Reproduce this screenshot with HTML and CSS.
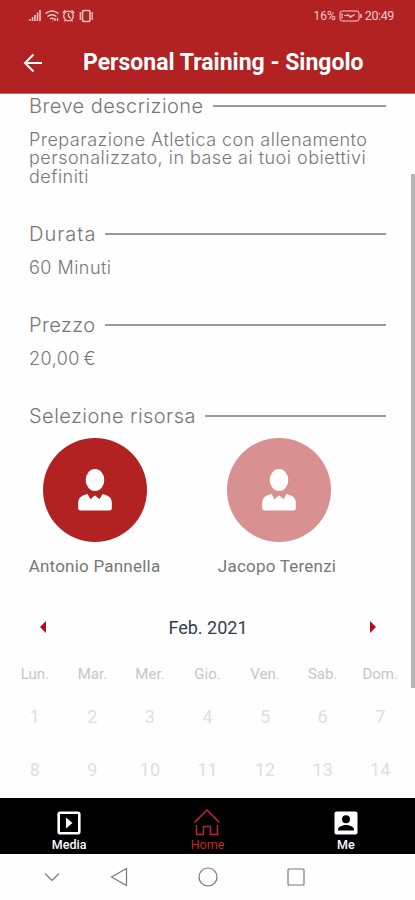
FILE: index.html
```
<!DOCTYPE html>
<html lang="it">
<head>
    <meta charset="UTF-8">
    <meta name="viewport" content="width=device-width, initial-scale=1.0">
    <title>Personal Training - Singolo</title>
    <link rel="stylesheet" href="styles.css">
</head>
<body>
    <header class="header">
        <div class="status-bar">
            <svg class="status-icons" width="68" height="16" viewBox="0 0 68 16" fill="none" stroke="currentColor">
                <!-- Signal -->
                <path d="M2 13v-2M4.5 13v-4M7 13V7M9.5 13V4.500M12 13V2" stroke-width="1.500"/>
                <!-- Wifi -->
                <path d="M17.500 5.500q6.500-5 13 0M19.500 8.500q4.500-3.500 9 0M22 11q2-1.500 4 0" stroke-width="1.500"/>
                <path d="M24 13h.5M27 10v3M29.500 10v3" stroke-width="1.300"/>
                <!-- Alarm -->
                <circle cx="40.500" cy="8" r="4.800" stroke-width="1.300"/>
                <path d="M40.500 5v3l2 2.500M34.800 5l2.700-2.700M46.200 5l-2.700-2.700M36.500 13.500l1-1.500M44.500 13.500l-1-1.500" stroke-width="1.300"/>
                <!-- Vibration -->
                <rect x="54.500" y="2.500" width="7.500" height="11" rx="1.500" stroke-width="1.500"/>
                <path d="M52.300 4v8M64.200 4v8" stroke-width="1.300"/>
            </svg>
            <div class="status-right">
                <span class="battery-level">16%</span>
                <svg width="23" height="12" viewBox="0 0 23 12" fill="none" stroke="currentColor">
                    <rect x="1" y="1" width="19" height="10" rx="2"/>
                    <path d="M22 4v4" stroke-width="1.500"/>
                    <path d="M3 3v6" stroke-width="1"/>
                    <path d="M5 5.500l5-1v2l6-2-5 3.500v-2z" fill="currentColor" stroke-width=".5"/>
                </svg>
                <span class="clock">20:49</span>
            </div>
        </div>
        <div class="title-bar">
            <svg class="back" width="20" height="20" viewBox="0 0 20 20" fill="none" stroke="currentColor" stroke-width="2">
                <path d="M19 10H2M10.500 1.500L2 10l8.500 8.500"/>
            </svg>
            <h1>Personal Training - Singolo</h1>
        </div>
    </header>

    <main class="content">
        <section class="info">
            <h2>Breve descrizione</h2>
            <p>Preparazione Atletica con allenamento<br>personalizzato, in base ai tuoi obiettivi<br>definiti</p>
        </section>
        <section class="info duration">
            <h2>Durata</h2>
            <p class="value">60 Minuti</p>
        </section>
        <section class="info">
            <h2>Prezzo</h2>
            <p class="value price">20,00 €</p>
        </section>
        <section class="resources">
            <h2>Selezione risorsa</h2>
            <div class="resource-list">
                <div class="resource">
                    <div class="avatar">
                        <svg width="34" height="42" viewBox="0 0 34 42" fill="currentColor">
                            <ellipse cx="17" cy="11" rx="9.300" ry="11"/>
                            <path d="M9.500 25L12.500 30.300L15 28L17 26.500L19 28L21.500 30.300L24.500 25Q33.800 27 33.800 33V39Q33.800 41.500 31.300 41.500H2.700Q.2 41.500.2 39V33Q.2 27 9.500 25Z"/>
                        </svg>
                    </div>
                    <span>Antonio Pannella</span>
                </div>
                <div class="resource unselected">
                    <div class="avatar">
                        <svg width="34" height="42" viewBox="0 0 34 42" fill="currentColor">
                            <ellipse cx="17" cy="11" rx="9.300" ry="11"/>
                            <path d="M9.500 25L12.500 30.300L15 28L17 26.500L19 28L21.500 30.300L24.500 25Q33.800 27 33.800 33V39Q33.800 41.500 31.300 41.500H2.700Q.2 41.500.2 39V33Q.2 27 9.500 25Z"/>
                        </svg>
                    </div>
                    <span>Jacopo Terenzi</span>
                </div>
            </div>
        </section>

        <section class="calendar">
            <div class="month">
                <svg width="6" height="12" viewBox="0 0 6 12" fill="currentColor"><path d="M6 0v12L0 6z"/></svg>
                <span>Feb. 2021</span>
                <svg width="6" height="12" viewBox="0 0 6 12" fill="currentColor"><path d="M0 0v12l6-6z"/></svg>
            </div>
            <div class="weekdays">
                <span>Lun.</span><span>Mar.</span><span>Mer.</span><span>Gio.</span><span>Ven.</span><span>Sab.</span><span>Dom.</span>
            </div>
            <div class="days">
                <span>1</span><span>2</span><span>3</span><span>4</span><span>5</span><span>6</span><span>7</span>
                <span>8</span><span>9</span><span>10</span><span>11</span><span>12</span><span>13</span><span>14</span>
            </div>
        </section>
        <div class="scrollbar"></div>
    </main>

    <nav class="tabs">
        <div class="tab">
            <svg width="24" height="24" viewBox="0 0 24 24" fill="none" stroke="currentColor">
                <rect x="1.700" y="1.700" width="20.600" height="20.600" rx="1.500" stroke-width="2.600"/>
                <path d="M9 6.500v11l6.500-5.500z" fill="currentColor" stroke="none"/>
            </svg>
            <span>Media</span>
        </div>
        <div class="tab active">
            <svg width="28" height="28" viewBox="0 0 28 28" fill="none" stroke="currentColor" stroke-width="1.500">
                <path d="M1.500 14.500L14 2l12.500 12.500M3.500 17v9.500h7v-8h7v8h7V17"/>
            </svg>
            <span>Home</span>
        </div>
        <div class="tab">
            <svg width="24" height="24" viewBox="0 0 24 24">
                <rect x=".5" y=".5" width="23" height="23" rx="2" fill="currentColor"/>
                <circle cx="12" cy="8.300" r="4" fill="#000"/>
                <path d="M4 19.500v-1c0-3 5-4.500 8-4.500s8 1.500 8 4.500v1z" fill="#000"/>
            </svg>
            <span>Me</span>
        </div>
    </nav>

    <div class="system-nav">
        <svg width="16" height="10" viewBox="0 0 16 10"><path d="M1 1.500l7 7 7-7"/></svg>
        <svg width="18" height="20" viewBox="0 0 18 20"><path d="M16.500 1.500v17L1.500 10z"/></svg>
        <svg width="20" height="20" viewBox="0 0 20 20"><circle cx="10" cy="10" r="9"/></svg>
        <svg width="18" height="18" viewBox="0 0 18 18"><rect x="1" y="1" width="16" height="16" rx="1"/></svg>
    </div>
</body>
</html>
```

FILE: styles.css
```
* {
    margin: 0;
    padding: 0;
    box-sizing: border-box;
}

body {
    width: 415px;
    height: 900px;
    display: flex;
    flex-direction: column;
    overflow: hidden;
    font-family: Roboto, sans-serif;
    background-color: #fefefe;
}

svg {
    display: block;
    flex: none;
}

.header {
    height: 94px;
    flex: none;
    background-color: #b22222;
    border-bottom: 1px solid #c96a6a;
    color: #fff;
}

.status-bar {
    height: 31px;
    display: flex;
    justify-content: space-between;
    align-items: center;
    padding: 0 21px 0 28px;
    color: #f3cccc;
}

.status-right {
    display: flex;
    align-items: center;
    gap: 3px;
    font-size: 12px;
}

.clock {
    font-size: 12.5px;
    letter-spacing: -0.4px;
}

.title-bar {
    height: 63px;
    display: flex;
    align-items: center;
    padding-left: 23px;
    gap: 40px;
}

h1 {
    font-size: 23px;
    font-weight: 700;
    line-height: 30px;
    white-space: nowrap;
}

.content {
    position: relative;
    flex: none;
    height: 704px;
    overflow: hidden;
}

.info {
    padding: 0 29px;
    margin-bottom: 34.75px;
}

h2 {
    height: 24px;
    display: flex;
    align-items: center;
    gap: 9px;
    font-family: Inter, sans-serif;
    font-size: 20px;
    font-weight: 300;
    letter-spacing: 0.45px;
    color: #777;
    white-space: nowrap;
}

.info + .info h2,
.resources h2 {
    height: 26px;
}

.duration h2 {
    letter-spacing: 1px;
}

h2::after {
    content: "";
    flex: 1;
    height: 1.5px;
    background-color: #999;
}

.info p {
    margin-top: 12.75px;
    font-family: Inter, sans-serif;
    font-size: 18px;
    font-weight: 300;
    line-height: 18.5px;
    letter-spacing: 0.48px;
    color: #777;
    white-space: nowrap;
}

.info p.value {
    margin-top: 11.75px;
}

.info p.price {
    word-spacing: -2px;
}

.resources h2 {
    margin: 0 29px 9px;
}

.resource-list {
    display: flex;
    padding-left: 29px;
    gap: 53px;
}

.resource {
    width: 131px;
    display: flex;
    flex-direction: column;
    align-items: center;
    gap: 14px;
    font-size: 17px;
    line-height: 20px;
    letter-spacing: 0.22px;
    color: #777;
    white-space: nowrap;
}

.unselected span {
    padding-right: 3px;
}

.avatar {
    width: 104px;
    height: 104px;
    display: flex;
    align-items: center;
    justify-content: center;
    border-radius: 50%;
    background-color: #b22222;
    color: #fff;
}

.unselected .avatar {
    background-color: #d89090;
}

.calendar {
    padding: 0 6px;
    margin-top: 32px;
}

.month {
    height: 38px;
    display: flex;
    align-items: center;
    justify-content: space-between;
    padding: 0 33px 0 34px;
    font-size: 18px;
    color: #2d4150;
}

.month svg {
    color: #b00f14;
}

.weekdays,
.days {
    display: grid;
    grid-template-columns: repeat(7, 1fr);
    text-align: center;
}

.weekdays {
    margin-top: 18px;
    font-size: 15px;
    line-height: 20px;
    color: #c2c7cd;
}

.days {
    margin-top: 5.5px;
    font-size: 18px;
    line-height: 53px;
    color: #dcdfe3;
}

.scrollbar {
    position: absolute;
    right: 0;
    top: 80px;
    width: 4px;
    height: 514px;
    background-color: #b5b5b5;
}

.tabs {
    height: 56px;
    flex: none;
    display: flex;
    background-color: #000;
    color: #fff;
}

.tab {
    flex: 1;
    display: flex;
    flex-direction: column;
    align-items: center;
    justify-content: flex-end;
    gap: 2px;
    padding-bottom: 1px;
    font-size: 12.5px;
    font-weight: 500;
    line-height: 16px;
}

.tab.active {
    gap: 1px;
    color: #c3272b;
    font-weight: 400;
}

.system-nav {
    flex: 1;
    display: flex;
    align-items: center;
    padding-left: 44px;
    fill: none;
    stroke: #777;
    stroke-width: 1.2;
}

.system-nav svg:nth-child(2) {
    margin-left: 50px;
}

.system-nav svg:nth-child(3) {
    margin-left: 70px;
}

.system-nav svg:nth-child(4) {
    margin-left: 69px;
}
```
